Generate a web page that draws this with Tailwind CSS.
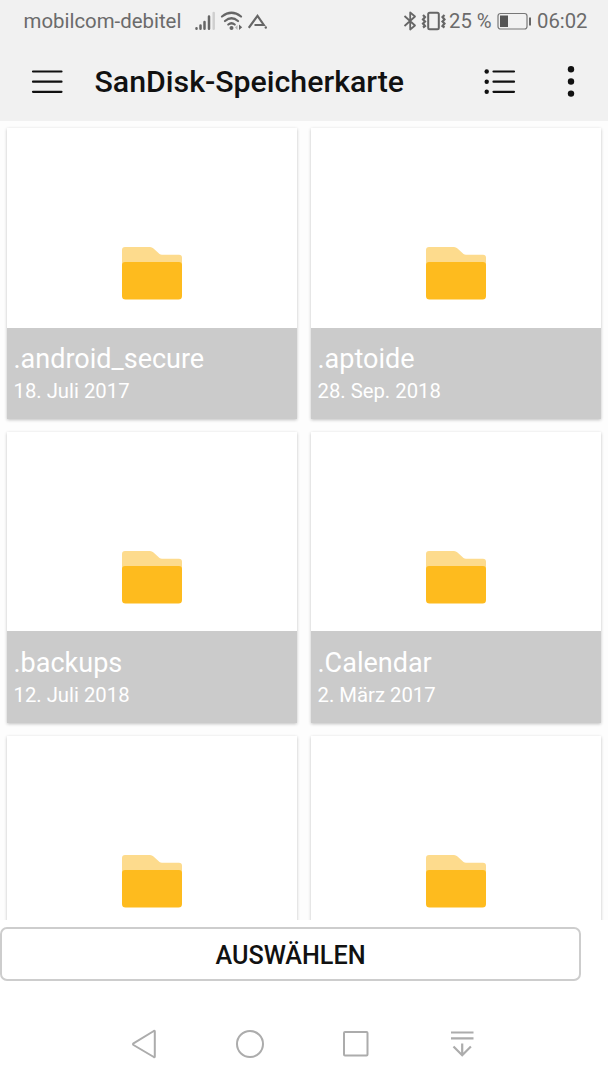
<!DOCTYPE html>
<html lang="de">
<head>
    <meta charset="UTF-8">
    <meta name="viewport" content="width=device-width, initial-scale=1.0">
    <title>SanDisk-Speicherkarte</title>
    <script src="https://cdn.jsdelivr.net/npm/@tailwindcss/browser@4"></script>
</head>
<body class="bg-white font-[Roboto,sans-serif]">
    <!-- Folder icon shared by all tiles -->
    <svg class="hidden">
        <symbol id="folder" viewBox="0 0 60 53">
            <path d="M0 18V3q0-3 3-3h25q2 0 3.500 1.500l6 5.500q1 .8 2.500.8h17q3 0 3 3V18z" fill="#fddb8d"/>
            <path d="M0 18q0-3 3-3h54q3 0 3 3v31q0 3.500-3.500 3.500h-53Q0 52.500 0 49z" fill="#febb1e"/>
        </symbol>
    </svg>

    <div class="w-[608px] h-[1080px] flex flex-col overflow-hidden">
        <header class="h-[121px] shrink-0 bg-[#f1f1f1]">
            <!-- Status bar -->
            <div class="h-[42px] flex items-center text-[20.300px] text-[#6b6b6b] whitespace-nowrap">
                <span class="ml-[23.500px] w-[171.500px] text-[20.400px]">mobilcom-debitel</span>
                <svg class="w-[20px] h-[20px]" viewBox="0 0 20 20" fill="none" stroke="#666" stroke-width="2.500" stroke-linecap="round">
                    <path d="M1.500 17.200v.5M5.500 14.500v3.200M9.500 11v6.700M14 5.500v12.200"/>
                    <path d="M18.700 2v15.700" stroke="#cfcfcf"/>
                </svg>
                <svg class="w-[24px] h-[20px] ml-[5px]" viewBox="0 0 24 20" fill="none" stroke="#666" stroke-width="2.200" stroke-linecap="round">
                    <path d="M2 5.500q9.500-7.500 19 0M5 10q6.500-5.500 13 0M8.300 13.500q3.200-2.500 6.400 0"/>
                    <circle cx="11.500" cy="17" r="2" fill="#666" stroke="none"/>
                    <path d="M17.500 14v5l-2.500-2.500z" fill="#b5b5b5" stroke="none"/>
                    <path d="M19 13.500v5.500l3.200-2.750z" fill="#666" stroke="none"/>
                </svg>
                <svg class="w-[20px] h-[20px] ml-[4px]" viewBox="0 0 20 20" fill="none" stroke="#666" stroke-width="2.100">
                    <path d="M.8 16.800L9.500 4.800l6.300 9.200H6.500"/>
                    <circle cx="17.800" cy="16.500" r="1.200" fill="#666" stroke="none"/>
                </svg>
                <svg class="w-[14px] h-[20px] ml-[135px]" viewBox="0 0 14 20" fill="none" stroke="#666" stroke-width="1.800" stroke-linejoin="round">
                    <path d="M1.500 5l10.500 9.500L7.200 18.500V1.500L12 5.500 1.500 15"/>
                </svg>
                <svg class="w-[26px] h-[20px] ml-[4px]" viewBox="0 0 26 20" fill="none" stroke="#666" stroke-width="2">
                    <rect x="7.200" y="1.800" width="10.600" height="16.400" rx="1.500"/>
                    <path d="M2 4l2 2-2 2.500 2 2-2 2 2 2.500-2 1.500M23.500 4l-2 2 2 2.500-2 2 2 2-2 2.500 2 1.500" stroke-width="2.200"/>
                </svg>
                <span class="ml-[2px] w-[48px]">25 %</span>
                <svg class="w-[35px] h-[20px]" viewBox="0 0 35 20" fill="none">
                    <rect x="1" y="2.500" width="29" height="15.500" rx="2.500" stroke="#777" stroke-width="1.200"/>
                    <rect x="3" y="4.500" width="8" height="11.500" fill="#555"/>
                    <rect x="32" y="6.500" width="2" height="8" fill="#666"/>
                </svg>
                <span class="ml-[5px]">06:02</span>
            </div>
            <!-- App bar -->
            <div class="h-[79px] flex items-center">
                <svg class="w-[32px] h-[26px] ml-[31px]" viewBox="0 0 32 26" stroke="#111" stroke-width="2.200" stroke-linecap="round">
                    <path d="M2 2.500h28.500M2 12.700h28.500M2 22.800h28.500"/>
                </svg>
                <h1 class="ml-[31.500px] w-[388.500px] pt-[1px] text-[30.300px] leading-[36px] font-medium text-[#111]">SanDisk-Speicherkarte</h1>
                <svg class="w-[34px] h-[26px]" viewBox="0 0 34 26" fill="#111" stroke="#111" stroke-width="2.200" stroke-linecap="round">
                    <path d="M10.500 2.500h20.500M10.500 12.700h20.500M10.500 22.800h20.500"/>
                    <g stroke="none">
                        <circle cx="3.700" cy="2.500" r="2.200"/>
                        <circle cx="3.700" cy="12.700" r="2.200"/>
                        <circle cx="3.700" cy="22.800" r="2.200"/>
                    </g>
                </svg>
                <svg class="w-[8px] h-[32px] ml-[50px]" viewBox="0 0 8 32" fill="#111">
                    <circle cx="4" cy="3.300" r="3.200"/>
                    <circle cx="4" cy="15.500" r="3.200"/>
                    <circle cx="4" cy="27.600" r="3.200"/>
                </svg>
            </div>
        </header>

        <!-- Folder grid -->
        <main class="h-[799px] shrink-0 overflow-hidden bg-[#fdfdfd] pt-[7px] pl-[7px] grid grid-cols-[290px_290px] auto-rows-[291px] gap-x-[14px] gap-y-[13px]">
            <div class="bg-white shadow-[0_1px_3px_rgba(0,0,0,0.24)] flex flex-col">
                <div class="h-[200px] flex justify-center pt-[119px]"><svg class="w-[60px] h-[53px]"><use href="#folder"/></svg></div>
                <div class="h-[91px] bg-[#cbcbcb] text-white pl-[6.500px] pt-[15px]">
                    <p class="text-[27px] leading-[32px]">.android_secure</p>
                    <p class="text-[20.300px] leading-[32px]">18. Juli 2017</p>
                </div>
            </div>
            <div class="bg-white shadow-[0_1px_3px_rgba(0,0,0,0.24)] flex flex-col">
                <div class="h-[200px] flex justify-center pt-[119px]"><svg class="w-[60px] h-[53px]"><use href="#folder"/></svg></div>
                <div class="h-[91px] bg-[#cbcbcb] text-white pl-[6.500px] pt-[15px]">
                    <p class="text-[27px] leading-[32px]">.aptoide</p>
                    <p class="text-[20.300px] leading-[32px]">28. Sep. 2018</p>
                </div>
            </div>
            <div class="bg-white shadow-[0_1px_3px_rgba(0,0,0,0.24)] flex flex-col">
                <div class="h-[199px] flex justify-center pt-[119px]"><svg class="w-[60px] h-[53px]"><use href="#folder"/></svg></div>
                <div class="h-[92px] bg-[#cbcbcb] text-white pl-[6.500px] pt-[16px]">
                    <p class="text-[27px] leading-[32px]">.backups</p>
                    <p class="text-[20.300px] leading-[32px]">12. Juli 2018</p>
                </div>
            </div>
            <div class="bg-white shadow-[0_1px_3px_rgba(0,0,0,0.24)] flex flex-col">
                <div class="h-[199px] flex justify-center pt-[119px]"><svg class="w-[60px] h-[53px]"><use href="#folder"/></svg></div>
                <div class="h-[92px] bg-[#cbcbcb] text-white pl-[6.500px] pt-[16px]">
                    <p class="text-[27px] leading-[32px]">.Calendar</p>
                    <p class="text-[20.300px] leading-[32px]">2. März 2017</p>
                </div>
            </div>
            <div class="bg-white shadow-[0_1px_3px_rgba(0,0,0,0.24)] flex justify-center pt-[119px]">
                <svg class="w-[60px] h-[53px]"><use href="#folder"/></svg>
            </div>
            <div class="bg-white shadow-[0_1px_3px_rgba(0,0,0,0.24)] flex justify-center pt-[119px]">
                <svg class="w-[60px] h-[53px]"><use href="#folder"/></svg>
            </div>
        </main>

        <button class="mt-[7px] w-[581px] h-[54px] shrink-0 rounded-[7px] border-2 border-[#cdcdcd] bg-white pt-[4px] text-[25.200px] font-medium text-[#111]">AUSWÄHLEN</button>

        <!-- Navigation bar -->
        <nav class="mt-[47px] ml-[130px] flex items-center gap-[76px]">
            <svg class="w-[30px] h-[32px]" viewBox="0 0 30 32" fill="none" stroke="#acacac" stroke-width="2" stroke-linejoin="round">
                <path d="M24.800 3.500v25q0 1-1 .5L3.500 17q-1-.8 0-1.600L23.800 3q1-.5 1 .5z"/>
            </svg>
            <svg class="w-[30px] h-[32px]" viewBox="0 0 30 32" fill="none" stroke="#acacac" stroke-width="2">
                <circle cx="14" cy="16" r="13"/>
            </svg>
            <svg class="w-[30px] h-[32px]" viewBox="0 0 30 32" fill="none" stroke="#acacac" stroke-width="2">
                <rect x="2" y="4" width="23.500" height="23.500" rx="1"/>
            </svg>
            <svg class="w-[30px] h-[32px]" viewBox="0 0 30 32" fill="none" stroke="#acacac" stroke-width="2.200">
                <path d="M3 4.500h22.500M3 10.300h22.500M14.200 15.500v11.500M5.500 18.500l8.700 8.700 8.700-8.700"/>
            </svg>
        </nav>
    </div>
</body>
</html>
